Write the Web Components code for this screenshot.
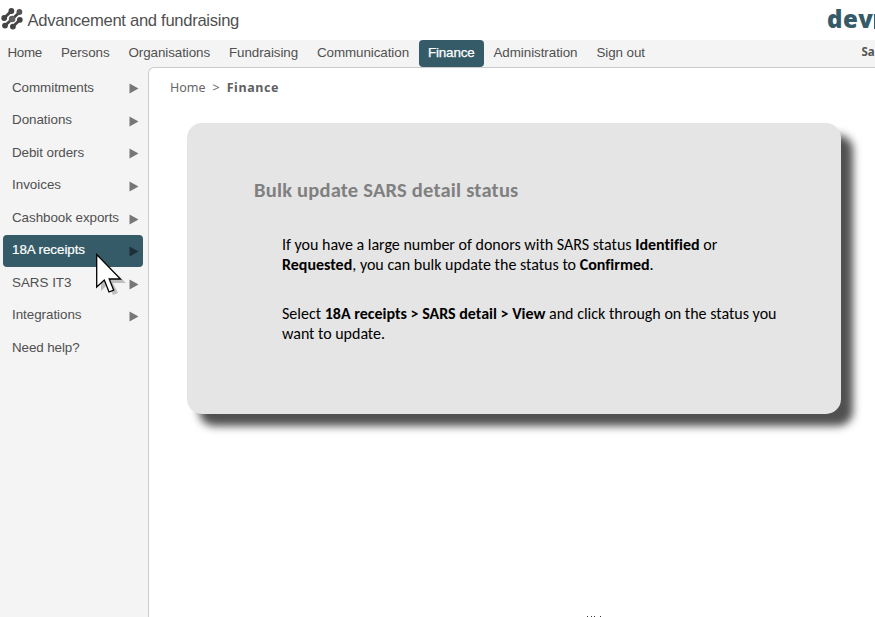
<!DOCTYPE html>
<html lang="en"><head><meta charset="utf-8"><title>Advancement and fundraising</title>
<style>html,body{margin:0;height:617px;overflow:hidden;background:#fff}</style></head>
<body><fund-app></fund-app>
<script>
const define = (name, html, init) => customElements.define(name, class extends HTMLElement {
  constructor(){ super(); this.attachShadow({mode:'open'}).innerHTML = html; }
  connectedCallback(){ if(init) init(this); }
});

// A single line whose tracking is adjusted to span a given width.
define('fit-text', `<style>:host{display:block;white-space:nowrap;width:max-content}span{display:inline-block}</style><span><slot></slot></span>`, el => {
  const target = +el.getAttribute('width');
  requestAnimationFrame(() => {
    const span = el.shadowRoot.querySelector('span');
    const n = el.textContent.trim().length;
    span.style.letterSpacing = ((target - span.getBoundingClientRect().width) / n) + 'px';
  });
});

define('dots-logo', `<style>:host{display:block;width:22px;height:22px}svg{display:block}</style>
<svg width="22" height="22" viewBox="0 0 22 22"><g stroke="#444" fill="#444" stroke-width="2.8">
<path d="M3.2 10 10.4 3M3.8 17.8 18.6 4.2M11.9 18.6 19 11.8" fill="none"/>
<g stroke="none"><circle cx="3.2" cy="10" r="2.9"/><circle cx="10.4" cy="3" r="2.9"/><circle cx="4" cy="17.6" r="2.9"/><circle cx="11.1" cy="11" r="3.3" fill="#606060"/><circle cx="18.4" cy="4" r="2.9" fill="#555"/><circle cx="11.9" cy="18.6" r="2.9"/><circle cx="18.8" cy="11.8" r="2.9"/></g></g></svg>`);

define('app-header', `<style>:host{display:flex;height:40px;background:#fff;overflow:hidden;color:#505050;font:16.6px "Liberation Sans",sans-serif}
dots-logo{margin:8px 0 0 1px}.t{margin:11px 0 0 4.5px;line-height:19px}.b{display:flex;margin:5px 0 0 auto;width:48px;font:800 24px/28px "Open Sans",sans-serif;color:#355b68;white-space:nowrap}
.b i{width:1px;height:15px;margin:9px 0 0 auto;background:#355b68}</style>
<dots-logo></dots-logo><fit-text class="t" width="211.5">Advancement and fundraising</fit-text><div class="b"><fit-text width="46.5">dev</fit-text><i></i></div>`);

define('nav-tab', `<style>:host{display:block;padding:0 9.5px;height:27px;font:13.4px/25px "Liberation Sans",sans-serif;color:#505050;border-radius:4px;box-sizing:border-box}
:host([active]){background:#355b68;color:#fff;-webkit-text-stroke:.25px #fff}</style><slot></slot>`);

define('nav-bar', `<style>:host{display:flex;height:27px;background:#f4f4f4}
nav{display:flex;margin-left:-2px}.u{margin-left:auto;width:13.5px;font:bold 11.5px/24px "Noto Sans",sans-serif;color:#555}</style>
<nav><nav-tab><fit-text width="34.5">Home</fit-text></nav-tab><nav-tab><fit-text width="48.5">Persons</fit-text></nav-tab><nav-tab><fit-text width="81.5">Organisations</fit-text></nav-tab><nav-tab><fit-text width="69">Fundraising</fit-text></nav-tab><nav-tab><fit-text width="92">Communication</fit-text></nav-tab><nav-tab active><fit-text width="46.5">Finance</fit-text></nav-tab><nav-tab><fit-text width="84">Administration</fit-text></nav-tab><nav-tab><fit-text width="48.5">Sign out</fit-text></nav-tab></nav><div class="u"><fit-text width="13">Sa</fit-text></div>`);

define('menu-item', `<style>:host{display:flex;align-items:center;justify-content:space-between;height:32.55px;box-sizing:border-box;padding:0 4px 0 9px;font:13.4px/20px "Liberation Sans",sans-serif;color:#505050;border-radius:4px}
fit-text,::slotted(*){margin-top:-1px}svg{display:block;margin-top:1.5px;fill:#77777a}:host([active]){background:#355b68;color:#fff;-webkit-text-stroke:.2px #fff}:host([active]) svg{fill:#1f2f3a}:host([leaf]) svg{display:none}</style>
<slot></slot><svg width="10" height="11" viewBox="0 0 10 11"><path d="M0.5 .5 9.5 5.5 .5 10.5Z"/></svg>`);

define('side-menu', `<style>:host{display:block;width:140px;flex:none;padding:4.8px 5px 0 3px}</style>
<menu-item><fit-text width="82">Commitments</fit-text></menu-item><menu-item><fit-text width="60">Donations</fit-text></menu-item><menu-item><fit-text width="72">Debit orders</fit-text></menu-item><menu-item><fit-text width="49">Invoices</fit-text></menu-item><menu-item><fit-text width="107">Cashbook exports</fit-text></menu-item><menu-item active><fit-text width="73">18A receipts</fit-text></menu-item><menu-item><fit-text width="59.5">SARS IT3</fit-text></menu-item><menu-item><fit-text width="69.5">Integrations</fit-text></menu-item><menu-item leaf><fit-text width="67.5">Need help?</fit-text></menu-item>`);

define('bread-crumbs', `<style>:host{display:flex;gap:7px;font:12.5px/18px "Noto Sans","DejaVu Sans",sans-serif;color:#666}b{color:#606060}</style>
<fit-text width="35.5">Home</fit-text><span>&gt;</span><b><fit-text width="52.5">Finance</fit-text></b>`);

define('info-card', `<style>:host{display:block;box-sizing:border-box;width:653.5px;height:291px;background:#e5e5e5;border-radius:15px;box-shadow:12px 12px 8px 0 #505050;padding:55px 0 0 67px;font:16px/20px Carlito,Lato,sans-serif;color:#000}
h2{margin:0;font:bold 20.5px/24px Carlito,Lato,sans-serif;color:#808080}
p{margin:33px 0 0 28px}p+p{margin-top:29px}</style>
<h2><fit-text width="264.5">Bulk update SARS detail status</fit-text></h2>
<p><fit-text width="435">If you have a large number of donors with SARS status <b>Identified</b> or</fit-text><fit-text width="371.5"><b>Requested</b>, you can bulk update the status to <b>Confirmed</b>.</fit-text></p>
<p><fit-text width="494.5">Select <b>18A receipts &gt; SARS detail &gt; View</b> and click through on the status you</fit-text><fit-text width="103">want to update.</fit-text></p>`);

define('mouse-pointer', `<style>:host{position:absolute;left:94px;top:252px}svg{display:block}</style>
<svg width="34" height="46" viewBox="0 0 34 46"><path d="M7 7V39L14 32 19 43 24 41 19 31H32Z" fill="#888" opacity=".5"/><path d="M2.7 2.5V35L10.3 28 15 40 19.7 38.2 15.2 27H26.5Z" fill="#fff" stroke="#000" stroke-width="1.3"/></svg>`);

define('fund-app', `<style>:host{display:flex;flex-direction:column;width:875px;height:617px;position:relative;overflow:hidden}
.body{display:flex;flex:1;background:#f4f4f4}main{flex:1;background:#fff;border:solid #ccc;border-width:1px 0 0 1px;border-radius:6px 0 0 0;padding:11px 0 0 21px;min-width:0;display:flex;flex-direction:column}
info-card{margin:26px 0 0 17px}.edge{display:flex;margin:auto 0 0 417px;height:1px}.edge i{width:1px;height:1px;margin-right:3px;background:#443038}.edge i+i{margin-right:2px}.edge i:last-child{margin-left:3px}</style>
<app-header></app-header><nav-bar></nav-bar><div class="body"><side-menu></side-menu><main><bread-crumbs></bread-crumbs><info-card></info-card><div class="edge"><i></i><i></i><i></i><i></i></div></main></div><mouse-pointer></mouse-pointer>`);
</script></body></html>
